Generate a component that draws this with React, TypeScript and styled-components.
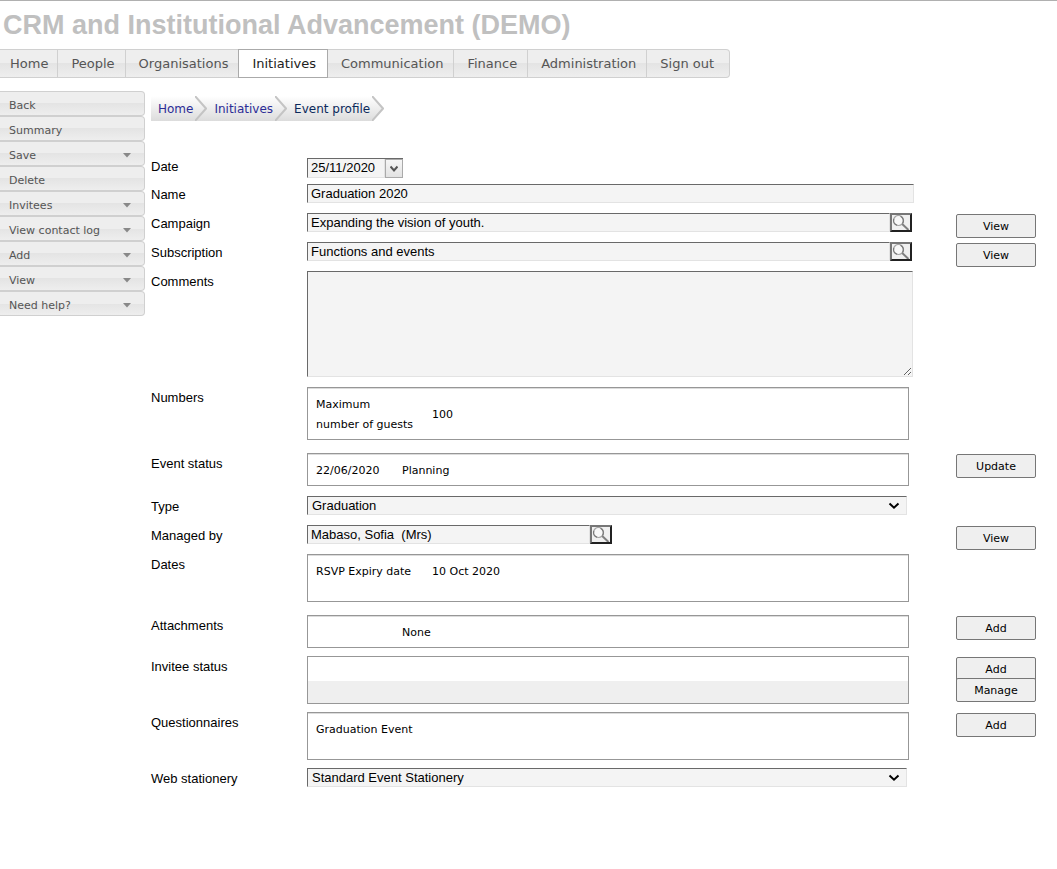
import React, { useState } from 'react';
import styled, { createGlobalStyle, css } from 'styled-components';

const verdana = "Verdana, 'DejaVu Sans', sans-serif";
const arial = "'Liberation Sans', Arial, sans-serif";

const GlobalStyle = createGlobalStyle`
  *, *::before, *::after { box-sizing: border-box; }
  body {
    margin: 0;
    background: #fff;
    color: #000;
    font-family: ${arial};
    font-size: 13px;
  }
  button, input, select, textarea { font: inherit; color: inherit; margin: 0; }
`;

const Page = styled.div`
  border-top: 1px solid #b0b0b0;
`;

const Title = styled.h1`
  margin: 0;
  padding: 8px 3px;
  font-size: 27px;
  line-height: 32px;
  font-weight: bold;
  color: #c0c0c0;
`;

const bevel = css`
  background: linear-gradient(#eeeeee 0, #eeeeee 50%, #e4e4e4 50%, #eeeeee 100%);
  border: 1px solid #d0d0d0;
`;

const NavBar = styled.nav`
  display: flex;
  width: fit-content;
  height: 29px;
  ${bevel}
  border-left: 0;
  border-radius: 0 4px 4px 0;
`;

const NavLink = styled.a<{ $active?: boolean }>`
  display: flex;
  align-items: center;
  margin: -1px 0;
  padding: 0 10px 0 13px;
  border-right: 1px solid #d0d0d0;
  font: 13px ${verdana};
  color: #555;
  text-decoration: none;
  &:first-child { padding-left: 10px; padding-right: 9px; }
  &:last-child { border-right: 0; padding-right: 15px; }
  ${(p) =>
    p.$active &&
    css`
      margin-left: -1px;
      padding-right: 11px;
      border: 1px solid #aaa;
      background: #fff;
      color: #212121;
    `}
`;

const Body = styled.div`
  display: flex;
  align-items: flex-start;
  gap: 6px;
  padding-top: 13px;
`;

const SideMenu = styled.nav`
  flex: none;
  width: 145px;
`;

const SideItem = styled.button`
  display: flex;
  align-items: center;
  justify-content: space-between;
  width: 100%;
  height: 25px;
  padding: 3px 13px 0 9px;
  ${bevel}
  border-left: 0;
  border-radius: 0 4px 4px 0;
  && { font: 11px ${verdana}; color: #555; }
`;

const Main = styled.main`
  flex: 1;
  min-width: 0;
  padding: 5px 21px 24px 0;
`;

const Crumbs = styled.nav`
  display: flex;
  height: 25px;
  margin-bottom: 35px;
  font: 12px ${verdana};
`;

const Crumb = styled.a`
  display: flex;
  align-items: center;
  padding: 0 2px 0 7px;
  background: linear-gradient(#ffffff, #dcdcdc);
  color: ${(p) => (p['aria-current'] ? '#0c2a5c' : '#2c2c96')};
  text-decoration: none;
`;

const Row = styled.div<{ $height: number }>`
  display: grid;
  grid-template-columns: 156px minmax(0, 1fr) 80px;
  align-items: start;
  min-height: ${(p) => p.$height}px;
`;

const Label = styled.label`
  padding-top: 3px;
  line-height: 16px;
`;

const Field = styled.div<{ $end?: number }>`
  padding-right: ${(p) => 42 + (p.$end ?? 0)}px;
`;

const inset = css`
  border: 1px solid;
  border-color: #696969 #e3e3e3 #e3e3e3 #696969;
  border-radius: 0;
  background: #f4f4f4;
  outline: 0;
`;

const TextBox = styled.input`
  display: block;
  width: 100%;
  min-width: 0;
  height: 19px;
  padding: 0 3px;
  ${inset}
`;

const Area = styled.textarea`
  display: block;
  width: 100%;
  height: 106px;
  padding: 3px;
  resize: vertical;
  ${inset}
`;

const Lookup = styled.div<{ $short?: boolean }>`
  display: flex;
  width: ${(p) => (p.$short ? '305px' : '100%')};
`;

const LookupButton = styled.button`
  flex: none;
  width: 22px;
  height: 19px;
  padding: 0;
  border: 2px solid;
  border-color: #767676 #212121 #212121 #767676;
  background: #f0f0f0;
  svg { display: block; }
`;

const DateBox = styled.div`
  display: flex;
  width: 96px;
  height: 20px;
  margin-top: 2px;
  border-top: 1px solid #696969;
  input { border-top: 0; padding-bottom: 2px; }
`;

const DateButton = styled.button`
  flex: none;
  display: grid;
  place-items: center;
  width: 18px;
  height: 19px;
  padding: 0;
  border: 1px solid #aaa;
  background: linear-gradient(#f6f6f6, #e2e2e2);
`;

const SelectWrap = styled.div`
  display: grid;
  align-items: center;
  select, svg { grid-area: 1 / 1; }
  svg { justify-self: end; margin-right: 7px; pointer-events: none; }
`;

const Select = styled.select`
  appearance: none;
  width: 100%;
  height: 19px;
  padding: 0 4px;
  ${inset}
`;

const Panel = styled.div<{ $height: number; $plain?: boolean }>`
  height: ${(p) => p.$height}px;
  padding: ${(p) => (p.$plain ? '24px 0 0' : '7px 8px 0')};
  border: 1px solid #979797;
  box-shadow: ${(p) => (p.$plain ? 'none' : 'inset 0 1px #dcdcdc')};
  font: 11px/20px ${verdana};
`;

const Data = styled.table`
  border-collapse: collapse;
  th, td { padding: 0; text-align: left; font-weight: normal; }
`;

const KeyCell = styled.th<{ $width: number }>`
  width: ${(p) => p.$width}px;
  padding-right: 16px !important;
`;

const Stripe = styled.div`
  height: 22px;
  background: #efefef;
`;

const Actions = styled.div`
  display: flex;
  flex-direction: column;
  padding-top: 1px;
`;

const Action = styled.button`
  height: 24px;
  padding: 0;
  border: 1px solid #767676;
  border-radius: 2px;
  background: #efefef;
  && { font: 11px ${verdana}; }
  & + & { margin-top: -3px; }
`;

const Chevron = () => (
  <svg width="12" height="25" viewBox="0 0 12 25" aria-hidden="true">
    <defs>
      <linearGradient id="crumbFill" x1="0" y1="0" x2="0" y2="1">
        <stop offset="0" stopColor="#ffffff" />
        <stop offset="1" stopColor="#dcdcdc" />
      </linearGradient>
    </defs>
    <path d="M0 0L11 12.5L0 25Z" fill="url(#crumbFill)" />
    <path d="M0 0L11 12.5L0 25" fill="none" stroke="#c4c4c4" strokeWidth="2" />
  </svg>
);

const Joint = styled.span<{ $last?: boolean }>`
  display: flex;
  background: ${(p) => (p.$last ? 'none' : 'linear-gradient(#ffffff, #dcdcdc)')};
`;

const Triangle = () => (
  <svg width="8" height="5" viewBox="0 0 8 5" aria-hidden="true">
    <path d="M0 0H8L4 4.5Z" fill="#888" />
  </svg>
);

const Arrow = () => (
  <svg width="12" height="8" viewBox="0 0 12 8" aria-hidden="true">
    <path d="M1.5 1.5L6 5.7L10.5 1.5" fill="none" stroke="#000" strokeWidth="2" />
  </svg>
);

const Magnifier = () => (
  <svg width="18" height="15" viewBox="0 0 18 15" aria-hidden="true">
    <circle cx="6.5" cy="5.5" r="5" fill="#f8f8f8" stroke="#a6a6a6" strokeWidth="1.2" />
    <path d="M8.5 1.2A5 5 0 0 1 10.5 8.5M1.8 4A5 5 0 0 0 5 10.2" fill="none" stroke="#777" strokeWidth="1.2" />
    <path d="M10.2 9L16.5 15" stroke="#808080" strokeWidth="2" />
  </svg>
);

const LookupField = ({ id, value, short }: { id: string; value: string; short?: boolean }) => {
  const [text, setText] = useState(value);
  return (
    <Lookup $short={short}>
      <TextBox id={id} value={text} onChange={(e) => setText(e.target.value)} />
      <LookupButton type="button" aria-label="Search">
        <Magnifier />
      </LookupButton>
    </Lookup>
  );
};

const SelectField = ({ id, value }: { id: string; value: string }) => (
  <SelectWrap>
    <Select id={id} defaultValue={value}>
      <option>{value}</option>
    </Select>
    <Arrow />
  </SelectWrap>
);

const FormRow = (props: {
  label: string;
  id?: string;
  height: number;
  end?: number;
  actions?: string[];
  children: React.ReactNode;
}) => (
  <Row $height={props.height}>
    <Label as={props.id ? 'label' : 'span'} htmlFor={props.id}>
      {props.label}
    </Label>
    <Field $end={props.end}>{props.children}</Field>
    {props.actions && (
      <Actions>
        {props.actions.map((a) => (
          <Action type="button" key={a}>
            {a}
          </Action>
        ))}
      </Actions>
    )}
  </Row>
);

const sections = ['Home', 'People', 'Organisations', 'Initiatives', 'Communication', 'Finance', 'Administration', 'Sign out'];

const sideItems: [string, boolean][] = [
  ['Back', false],
  ['Summary', false],
  ['Save', true],
  ['Delete', false],
  ['Invitees', true],
  ['View contact log', true],
  ['Add', true],
  ['View', true],
  ['Need help?', true],
];

export default function App() {
  return (
    <Page>
      <GlobalStyle />
      <Title>CRM and Institutional Advancement (DEMO)</Title>
      <NavBar>
        {sections.map((s) => (
          <NavLink href="#" key={s} $active={s === 'Initiatives'}>
            {s}
          </NavLink>
        ))}
      </NavBar>
      <Body>
        <SideMenu>
          {sideItems.map(([name, menu]) => (
            <SideItem type="button" key={name}>
              {name}
              {menu && <Triangle />}
            </SideItem>
          ))}
        </SideMenu>
        <Main>
          <Crumbs aria-label="Breadcrumb">
            <Crumb href="#">Home</Crumb>
            <Joint><Chevron /></Joint>
            <Crumb href="#">Initiatives</Crumb>
            <Joint><Chevron /></Joint>
            <Crumb href="#" aria-current="page">Event profile</Crumb>
            <Joint $last><Chevron /></Joint>
          </Crumbs>

          <FormRow label="Date" id="date" height={28}>
            <DateBox>
              <TextBox id="date" defaultValue="25/11/2020" />
              <DateButton type="button" aria-label="Choose date">
                <svg width="8" height="8" viewBox="0 0 8 8" aria-hidden="true">
                  <path d="M0.5 1.5L4 5.5L7.5 1.5" fill="none" stroke="#555" strokeWidth="2" />
                </svg>
              </DateButton>
            </DateBox>
          </FormRow>
          <FormRow label="Name" id="name" height={29}>
            <TextBox id="name" defaultValue="Graduation 2020" />
          </FormRow>
          <FormRow label="Campaign" id="campaign" height={29} end={2} actions={['View']}>
            <LookupField id="campaign" value="Expanding the vision of youth." />
          </FormRow>
          <FormRow label="Subscription" id="subscription" height={29} end={2} actions={['View']}>
            <LookupField id="subscription" value="Functions and events" />
          </FormRow>
          <FormRow label="Comments" id="comments" height={116} end={1}>
            <Area id="comments" />
          </FormRow>
          <FormRow label="Numbers" height={66} end={5}>
            <Panel $height={53}>
              <Data>
                <tbody>
                  <tr>
                    <KeyCell scope="row" $width={116}>Maximum number of guests</KeyCell>
                    <td>100</td>
                  </tr>
                </tbody>
              </Data>
            </Panel>
          </FormRow>
          <FormRow label="Event status" height={43} end={5} actions={['Update']}>
            <Panel $height={33}>
              <Data>
                <tbody>
                  <tr>
                    <KeyCell scope="row" $width={86}>22/06/2020</KeyCell>
                    <td>Planning</td>
                  </tr>
                </tbody>
              </Data>
            </Panel>
          </FormRow>
          <FormRow label="Type" id="type" height={29} end={7}>
            <SelectField id="type" value="Graduation" />
          </FormRow>
          <FormRow label="Managed by" id="manager" height={29} actions={['View']}>
            <LookupField id="manager" value="Mabaso, Sofia  (Mrs)" short />
          </FormRow>
          <FormRow label="Dates" height={61} end={5}>
            <Panel $height={48}>
              <Data>
                <tbody>
                  <tr>
                    <KeyCell scope="row" $width={116}>RSVP Expiry date</KeyCell>
                    <td>10 Oct 2020</td>
                  </tr>
                </tbody>
              </Data>
            </Panel>
          </FormRow>
          <FormRow label="Attachments" height={41} end={5} actions={['Add']}>
            <Panel $height={33}>
              <Data>
                <tbody>
                  <tr>
                    <KeyCell as="td" $width={86} />
                    <td>None</td>
                  </tr>
                </tbody>
              </Data>
            </Panel>
          </FormRow>
          <FormRow label="Invitee status" height={56} end={5} actions={['Add', 'Manage']}>
            <Panel $height={48} $plain>
              <Stripe />
            </Panel>
          </FormRow>
          <FormRow label="Questionnaires" height={56} end={5} actions={['Add']}>
            <Panel $height={48}>Graduation Event</Panel>
          </FormRow>
          <FormRow label="Web stationery" id="stationery" height={29} end={7}>
            <SelectField id="stationery" value="Standard Event Stationery" />
          </FormRow>
        </Main>
      </Body>
    </Page>
  );
}
